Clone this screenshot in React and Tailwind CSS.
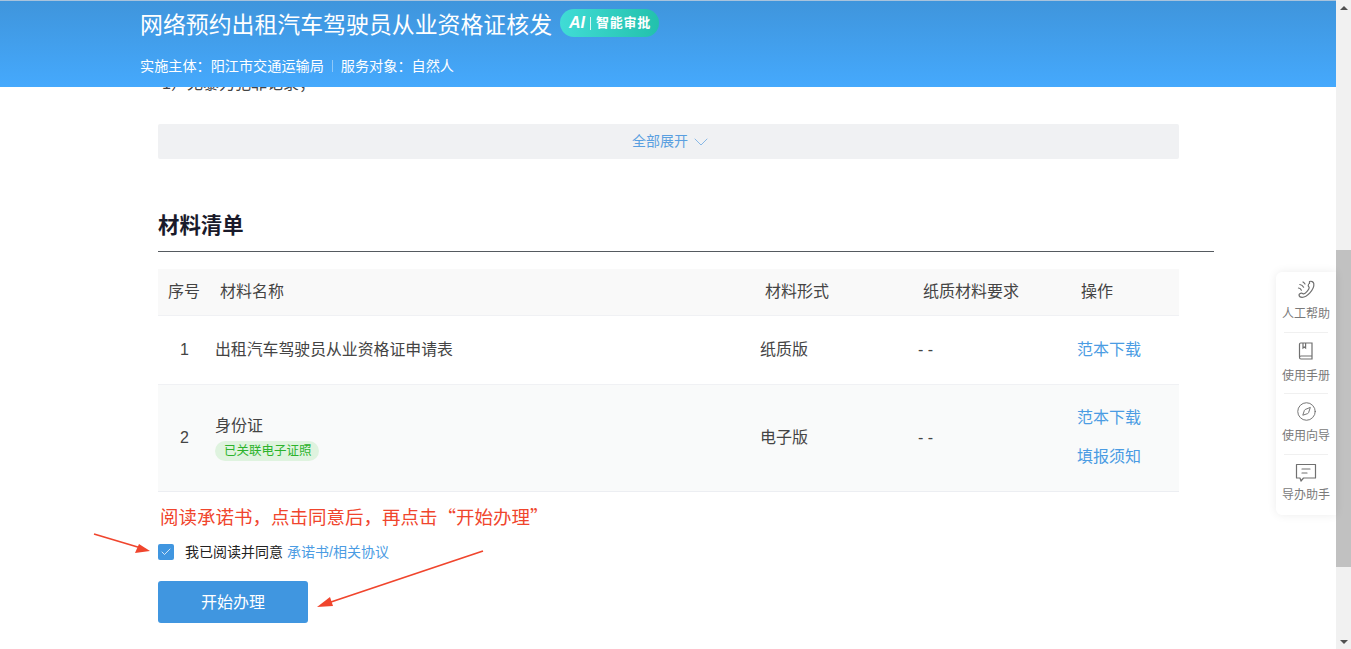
import React from 'react';
import { ChevronDown, Check, Compass } from 'lucide-react';

const HelpItem = ({ icon, label, last, labelClass }) => (
  <div className={`mx-[8px] flex h-[61px] flex-col items-center pt-[6px] ${last ? '' : 'border-b border-[#f0f0f0]'}`}>
    <div className="flex h-[24px] items-center justify-center text-[#707070]">{icon}</div>
    <span className={`whitespace-nowrap text-[12px] leading-[16px] text-[#7a7a7a] ${labelClass}`}>{label}</span>
  </div>
);

const Scrollbar = () => (
  <div className="flex h-full w-[15px] shrink-0 flex-col bg-[#f1f1f1]">
    <div className="flex h-[15px] items-center justify-center">
      <div className="h-0 w-0 border-x-[4px] border-b-[4px] border-x-transparent border-b-[#505050]" />
    </div>
    <div className="mt-[235px] h-[317px] bg-[#c1c1c1]" />
    <div className="mt-auto flex h-[15px] items-center justify-center">
      <div className="h-0 w-0 border-x-[4px] border-t-[4px] border-x-transparent border-t-[#505050]" />
    </div>
  </div>
);

const App = () => {
  return (
    <div className="relative flex h-screen w-full overflow-hidden bg-white font-['Liberation_Sans','Noto_Sans_CJK_SC',sans-serif] text-[#333]">
      <div className="relative min-w-0 flex-1">
        {/* top banner */}
        <div className="h-[87px] border-t border-[#a9c3dc] bg-gradient-to-b from-[#3f95dc] to-[#45a9fd] pl-[140px] text-white">
          <div className="flex h-[48px] items-center">
            <h1 className="text-[22.9px] leading-[30px] font-normal">网络预约出租汽车驾驶员从业资格证核发</h1>
            <div className="-mt-[4px] ml-[8px] flex h-[28px] w-[99px] items-center justify-start rounded-full bg-gradient-to-r from-[#40dcd6] to-[#22c1ac] pl-[9px] text-[13px] font-bold">
              <span className="text-[16px] italic">AI</span>
              <span className="ml-[5px] mr-[5px] h-[13px] w-px bg-white/80" />
              <span className="tracking-[0.7px]">智能审批</span>
            </div>
          </div>
          <div className="mt-[7px] flex items-center text-[14.15px] leading-[20px]">
            <span>实施主体：阳江市交通运输局</span>
            <span className="mx-[8px] h-[12px] w-px bg-white/40" />
            <span>服务对象：自然人</span>
          </div>
        </div>

        <div className="pl-[158px]">
          <div className="h-[6px] overflow-hidden">
            <p className="-mt-[15px] pl-[4px] text-[16px] leading-[24px] text-[#444]">1）无暴力犯罪记录；</p>
          </div>

          <div className="mt-[31px] flex h-[35px] w-[1021px] items-center justify-center gap-[1px] rounded-[2px] bg-[#f0f1f3] pl-[8px] text-[14px] text-[#5a9fe0]">
            <span>全部展开</span>
            <ChevronDown size={24} strokeWidth={0.7} />
          </div>

          <h2 className="mt-[51px] text-[21.4px] leading-[32px] font-bold text-[#1a1a2a]">材料清单</h2>
          <div className="mt-[9px] h-px w-[1056px] bg-[#555a60]" />

          {/* material table */}
          <div className="mt-[17px] w-[1021px] text-[16px]">
            <div className="grid h-[47px] grid-cols-[57px_545px_158px_160px_101px] items-center border-b border-[#f0f1f4] bg-[#f9f9f9] text-[#444]">
              <span className="pl-[10px]">序号</span>
              <span className="pl-[5px]">材料名称</span>
              <span className="pl-[5px]">材料形式</span>
              <span className="pl-[5px]">纸质材料要求</span>
              <span className="pl-[3px]">操作</span>
            </div>
            <div className="grid h-[69px] grid-cols-[57px_545px_158px_160px_101px] items-center border-b border-[#f0f1f4] bg-white text-[#444]">
              <span className="pl-[22px]">1</span>
              <span className="text-[15.87px]">出租汽车驾驶员从业资格证申请表</span>
              <span>纸质版</span>
              <span>- -</span>
              <a className="-mt-[1px] -ml-[1px] text-[#4b9ce3]">范本下载</a>
            </div>
            <div className="grid h-[107px] grid-cols-[57px_545px_158px_160px_101px] items-center border-b border-[#eceef2] bg-[#f9fafa] text-[#444]">
              <span className="pl-[22px]">2</span>
              <div>
                <div className="leading-[24px]">身份证</div>
                <span className="mt-[2px] inline-block h-[20px] rounded-full bg-[#dff3df] pr-[7px] pl-[9px] text-[12.5px] leading-[20px] text-[#2cb32c]">已关联电子证照</span>
              </div>
              <span>电子版</span>
              <span>- -</span>
              <div className="-mt-[1px] -ml-[1px] flex flex-col gap-[15px] leading-[24px] text-[#4b9ce3]">
                <a>范本下载</a>
                <a>填报须知</a>
              </div>
            </div>
          </div>

          <p className="mt-[11px] pl-[2px] font-['Noto_Sans_CJK_SC',sans-serif] text-[18.5px] leading-[26px] text-[#f0452d]">阅读承诺书，点击同意后，再点击“开始办理”</p>

          <div className="mt-[13px] flex items-center text-[14px] leading-[20px]">
            <div className="flex h-[16px] w-[16px] items-center justify-center rounded-[2px] bg-[#4096e0]">
              <Check size={12} strokeWidth={1.5} className="text-white" />
            </div>
            <span className="ml-[11px] text-[#222]">我已阅读并同意</span>
            <a className="ml-[4px] text-[#4b9ce3]">承诺书/相关协议</a>
          </div>

          <button className="mt-[19px] h-[42px] w-[150px] rounded-[3px] bg-[#4096e0] pt-[1px] text-[16px] text-white">开始办理</button>
        </div>

        {/* floating help panel */}
        <div className="absolute top-[272px] right-0 h-[243px] w-[60px] rounded-l-[6px] bg-white shadow-[0_0_10px_rgba(0,0,0,0.08)]">
          <HelpItem
            label="人工帮助"
            labelClass="mt-[4px]"
            icon={
              <svg width="20" height="20" viewBox="0 0 20 20" fill="none" stroke="currentColor" strokeWidth="1.2" strokeLinecap="round" strokeLinejoin="round">
                <path d="M13.5 1.500c1.800-.8 4 .4 4.300 2.200.4 2.800-1.200 6.200-3.900 9.200-2.400 2.600-5.400 4.400-7.800 4.400-1.600 0-3-1-3.100-2.300 0-.8 1.400-1.800 2.500-1.900.9-.1 1.300.9 2.200.8 1.700-.2 5.500-4.500 5.500-6.200 0-.9-1.100-1.300-1-2.200.1-.9.700-2 1.300-2z" />
                <path d="M2.500 8c1.100.2 2.300 1 2.900 2.200M3.800 4.500c1.500.3 3 1.300 3.800 2.700M7 2c.8.5 1.500 1.200 2 2" />
              </svg>
            }
          />
          <HelpItem
            label="使用手册"
            labelClass="mt-[5px]"
            icon={
              <svg width="16" height="18" viewBox="0 0 16 18" fill="none" stroke="currentColor" strokeWidth="1.2">
                <path d="M1.500 15V2.200C1.500 1.500 2 1 2.700 1h11.300v13H3c-.9 0-1.500.6-1.500 1.500S2.100 17 3 17h11v-3" />
                <path d="M5 1v5l1.300-1 1.300 1V1" />
              </svg>
            }
          />
          <HelpItem label="使用向导" labelClass="mt-[4px]" icon={<Compass size={21} strokeWidth={1.1} className="-mt-[1px]" />} />
          <HelpItem
            last
            label="导办助手"
            labelClass="mt-[2px]"
            icon={
              <svg width="22" height="20" viewBox="0 0 22 20" fill="none" stroke="currentColor" strokeWidth="1.2" strokeLinejoin="round">
                <path d="M1.500 1.500h19v13.500H8.500l-2.500 3-1-3H1.500z" />
                <path d="M7 6h8M7 10h5" strokeLinecap="round" />
              </svg>
            }
          />
        </div>

        {/* red annotation arrows */}
        <svg className="pointer-events-none absolute top-[525px] left-[85px]" width="410" height="90" viewBox="0 0 410 90" fill="none">
          <path d="M9 9 L56 23" stroke="#f0452d" strokeWidth="1.8" />
          <path d="M65 26 L50 28 L54 19z" fill="#f0452d" />
          <path d="M398 26 L240 79" stroke="#f0452d" strokeWidth="1.8" />
          <path d="M232 82 L245 72 L248 81z" fill="#f0452d" />
        </svg>
      </div>
      <Scrollbar />
    </div>
  );
};

export default App;
